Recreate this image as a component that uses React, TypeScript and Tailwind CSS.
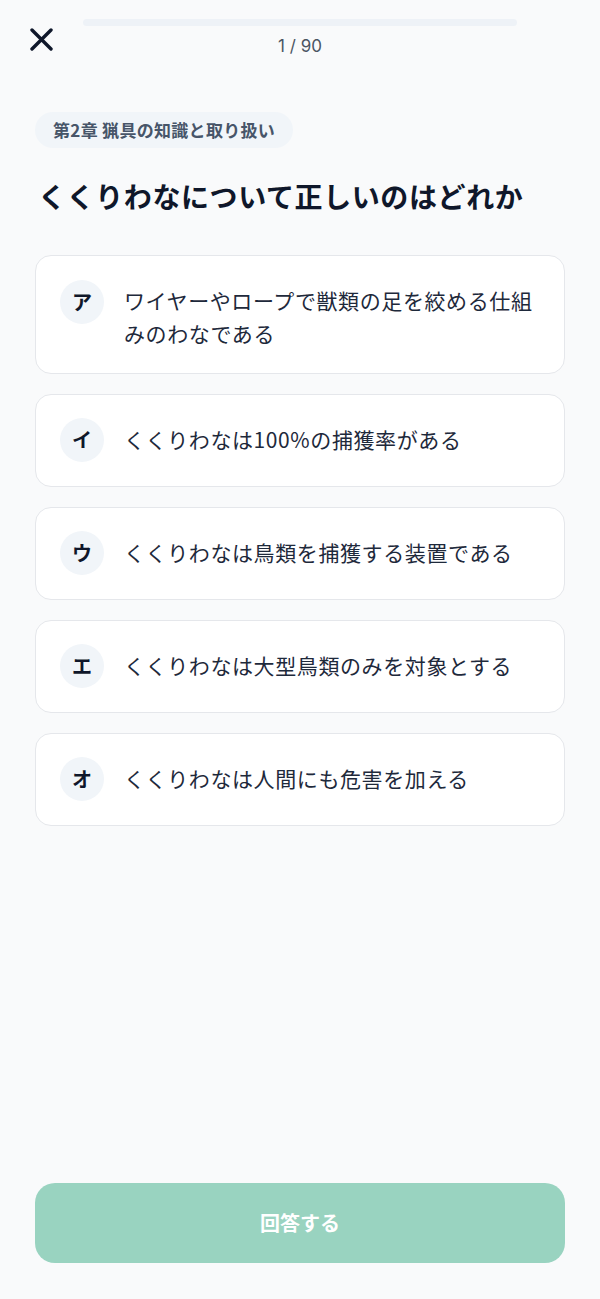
const options = [
  { key: 'ア', text: 'ワイヤーやロープで獣類の足を絞める仕組みのわなである' },
  { key: 'イ', text: 'くくりわなは100%の捕獲率がある' },
  { key: 'ウ', text: 'くくりわなは鳥類を捕獲する装置である' },
  { key: 'エ', text: 'くくりわなは大型鳥類のみを対象とする' },
  { key: 'オ', text: 'くくりわなは人間にも危害を加える' },
];

export default function App() {
  return (
    <div className="min-h-[1299px] bg-[#f9fafb] flex flex-col font-['Noto_Sans_CJK_JP',sans-serif] text-[#1e293b]">
      {/* header */}
      <div className="flex items-start pl-[30px] pr-[83px] pt-[19px]">
        <button className="w-[23px] h-[23px] mt-[9px] shrink-0" aria-label="close">
          <svg viewBox="0 0 23 23" className="w-[23px] h-[23px]">
            <path d="M2 2 L21 21 M21 2 L2 21" stroke="#0f172a" strokeWidth="3.4" strokeLinecap="round" fill="none" />
          </svg>
        </button>
        <div className="flex-1 ml-[30px] flex flex-col items-center">
          <div className="w-full h-[7px] rounded-full bg-[#eef2f7]" />
          <p className="mt-[9px] text-[17px] leading-[22px] text-[#4b5563] font-['Inter',sans-serif]">1 / 90</p>
        </div>
      </div>

      <div className="px-[35px] pt-[55px]">
        <span className="inline-block rounded-full bg-[#f1f5f9] px-[18px] py-[7px] text-[17px] leading-[22px] font-bold tracking-[0.3px] text-[#475569]">
          第2章 猟具の知識と取り扱い
        </span>
        <h1 className="mt-[28px] ml-[3px] text-[28px] leading-[40px] font-bold tracking-[0.6px] text-[#0f172a]">
          くくりわなについて正しいのはどれか
        </h1>

        <div className="mt-[39px] flex flex-col gap-[20px]">
          {options.map(o => (
            <button key={o.key} className="w-full text-left flex items-start gap-[20px] rounded-[16px] border border-[#e5e7eb] bg-white px-6 py-[23.5px]">
              <span className="w-[44px] h-[44px] shrink-0 rounded-full bg-[#f1f5f9] flex items-center justify-center text-[20px] font-bold text-[#0f172a]">
                {o.key}
              </span>
              <span className="mt-[4.5px] text-[21px] leading-[32.5px] tracking-[0.6px] text-[#1e293b]">{o.text}</span>
            </button>
          ))}
        </div>
      </div>

      <div className="mt-auto px-[35px] pb-[36px]">
        <button disabled className="w-full h-[80px] rounded-[20px] bg-[#99d3c0] text-white text-[20px] font-bold">
          回答する
        </button>
      </div>
    </div>
  );
}
